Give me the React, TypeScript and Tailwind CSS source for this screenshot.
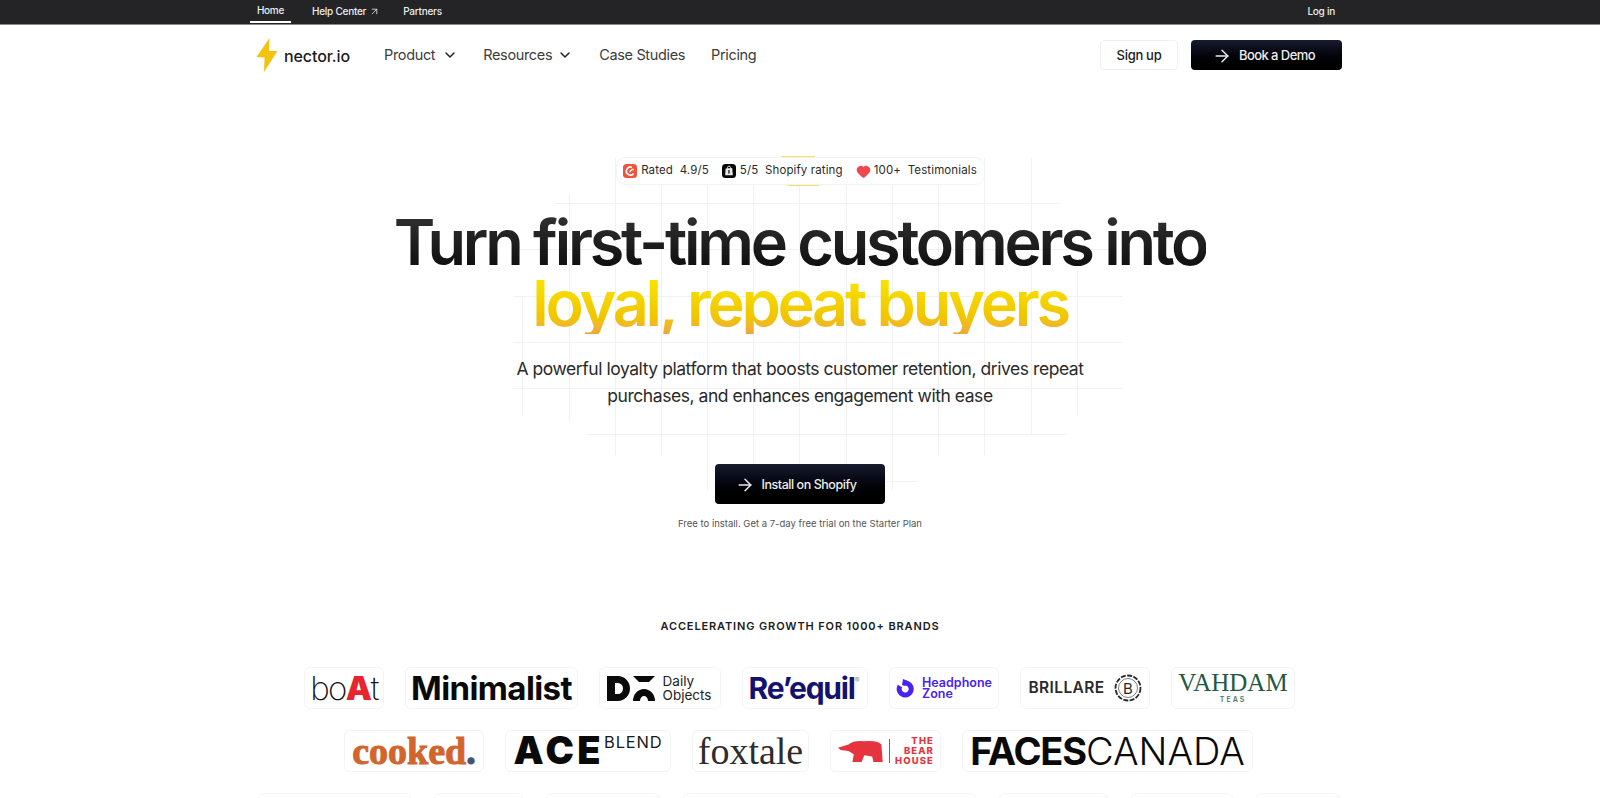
import React from "react";
import { ArrowRight, ArrowUpRight, ChevronDown, Heart } from "lucide-react";

const verticalLines = [
  { x: 522, y1: 296, y2: 415 },
  { x: 569, y1: 194, y2: 420 },
  { x: 615, y1: 157, y2: 455 },
  { x: 661, y1: 185, y2: 455 },
  { x: 707, y1: 185, y2: 490 },
  { x: 753, y1: 185, y2: 500 },
  { x: 799, y1: 185, y2: 500 },
  { x: 846, y1: 185, y2: 490 },
  { x: 892, y1: 185, y2: 490 },
  { x: 938, y1: 185, y2: 455 },
  { x: 984, y1: 157, y2: 455 },
  { x: 1031, y1: 158, y2: 434 },
  { x: 1077, y1: 270, y2: 415 },
];

const horizontalLines = [
  { y: 203, x1: 555, x2: 1060 },
  { y: 249, x1: 513, x2: 1113 },
  { y: 296, x1: 513, x2: 1122 },
  { y: 342, x1: 513, x2: 1122 },
  { y: 388, x1: 513, x2: 1122 },
  { y: 434, x1: 587, x2: 1067 },
  { y: 481, x1: 780, x2: 918 },
];

const GridLines = () => (
  <svg
    className="absolute left-0 top-0 pointer-events-none"
    width="1600"
    height="798"
    viewBox="0 0 1600 798"
  >
    {verticalLines.map((l) => (
      <line key={l.x} x1={l.x + 0.5} x2={l.x + 0.5} y1={l.y1} y2={l.y2} stroke="#f1f1f1" />
    ))}
    {horizontalLines.map((l) => (
      <line key={l.y} y1={l.y + 0.5} y2={l.y + 0.5} x1={l.x1} x2={l.x2} stroke="#f1f1f1" />
    ))}
  </svg>
);

const Bolt = () => (
  <svg width="22" height="34" viewBox="0 0 22 34">
    <path d="M13.5 0 L0.5 19 L8.5 19.5 L8 34 L21.5 13 L13 13 Z" fill="#f2c40f" />
  </svg>
);

const G2Icon = () => (
  <svg width="14" height="14" viewBox="0 0 14 14">
    <rect width="14" height="14" rx="3.5" fill="#f0523a" />
    <path d="M8.8 3.3 A4 4 0 1 0 10.5 9.6" fill="none" stroke="#fff" strokeWidth="1.7" />
    <path d="M6.5 8 L9 5.5 L10.8 5.5" fill="none" stroke="#fff" strokeWidth="1.3" />
  </svg>
);

const ShopifyIcon = () => (
  <svg width="14" height="14" viewBox="0 0 14 14">
    <rect width="14" height="14" rx="3.5" fill="#050505" />
    <path d="M3.6 4.6 L10.2 4 L10.8 11.2 L3.2 11.2 Z" fill="#e8e8e8" />
    <path d="M5.4 4.8 V3.8 A1.6 1.6 0 0 1 8.6 3.8 V4.6" fill="none" stroke="#e8e8e8" strokeWidth="0.9" />
    <rect x="6.2" y="6" width="1.5" height="3.6" fill="#333" />
  </svg>
);

const LogoCard = ({
  className,
  children,
}: {
  className: string;
  children?: React.ReactNode;
}) => (
  <div
    className={`h-[42px] shrink-0 flex items-center justify-center bg-white border border-[#f4f4f4] rounded-md ${className}`}
  >
    {children}
  </div>
);

const Topbar = () => (
  <div className="h-[25px] bg-[#242426] border-b border-[#8a8a8a] pl-[250px] pr-[265px] flex items-start justify-between text-[10px] text-[#ececec] font-medium tracking-[-0.25px]">
    <div className="flex items-start">
      <div className="w-[41px] h-[23px] flex items-center justify-center border-b-2 border-white pt-[1px] pb-[1px]">
        Home
      </div>
      <div className="ml-[21px] h-[21px] pt-[1px] flex items-center gap-[3px]">
        Help Center
        <ArrowUpRight size={11} strokeWidth={1.75} />
      </div>
      <div className="ml-[23px] h-[21px] pt-[1px] flex items-center">Partners</div>
    </div>
    <div className="h-[21px] pt-[1px] flex items-center">Log in</div>
  </div>
);

const Navbar = () => (
  <nav className="h-[60px] pl-[256px] pr-[258px] flex items-center justify-between">
    <div className="flex items-center">
      <Bolt />
      <span className="ml-[6px] pt-[1px] text-[16px] font-medium text-[#1c1c1c] tracking-[-0.1px]">
        nector.io
      </span>
      <div className="ml-[34px] flex items-center text-[14.5px] text-[#3c3c3c] tracking-[-0.35px]">
        <span>Product</span>
        <ChevronDown size={16} strokeWidth={2.2} className="ml-[7px] text-[#222]" />
        <span className="ml-[25px]">Resources</span>
        <ChevronDown size={16} strokeWidth={2.2} className="ml-[5px] text-[#222]" />
        <span className="ml-[26px]">Case Studies</span>
        <span className="ml-[26px]">Pricing</span>
      </div>
    </div>
    <div className="flex items-center gap-[13px]">
      <button className="w-[78px] h-[30px] pt-[1px] bg-white border border-[#f0f0f0] rounded text-[13px] font-medium text-[#1c1c1c] tracking-[-0.3px]">
        Sign up
      </button>
      <button className="w-[151px] h-[30px] pt-[1px] pr-[6px] rounded bg-gradient-to-b from-[#181c30] to-black text-[13px] text-[#ececec] font-medium tracking-[-0.55px] flex items-center justify-center gap-[7px]">
        <ArrowRight size={20} strokeWidth={1.75} />
        Book a Demo
      </button>
    </div>
  </nav>
);

const Hero = () => (
  <section className="flex flex-col items-center pt-[72px]">
    <div className="relative h-[28px] w-[369px]">
      <span className="absolute left-[165px] top-[-1px] w-[34px] h-[2px] bg-[#f6dc62]" />
      <span className="absolute left-[172px] bottom-[-1px] w-[31px] h-[2px] bg-[#f6dc62]" />
      <div className="relative h-full bg-white border border-[#f3f3f3] rounded-[10px] flex items-center justify-center gap-[13px] text-[11.5px] text-[#2c2c2c] tracking-[0.12px] whitespace-nowrap">
        <div className="flex items-center gap-[4px]">
          <G2Icon />
          <span>Rated&nbsp; 4.9/5</span>
        </div>
        <div className="flex items-center gap-[4px]">
          <ShopifyIcon />
          <span>5/5&nbsp; Shopify rating</span>
        </div>
        <div className="flex items-center gap-[3px]">
          <Heart size={15} fill="#f2474f" stroke="#f2474f" />
          <span>100+&nbsp; Testimonials</span>
        </div>
      </div>
    </div>
    <h1 className="relative mt-[27px] text-center text-[63px] leading-[61px] font-semibold tracking-[-3.25px] whitespace-nowrap">
      <span className="block bg-gradient-to-b from-[#333333] to-[#0c0c0c] bg-clip-text text-transparent">
        Turn first-time customers into
      </span>
      <span className="block bg-gradient-to-b from-[#f9e900] via-[#f0c400] via-75% to-[#f0a63a] bg-clip-text text-transparent">
        loyal, repeat buyers
      </span>
    </h1>
    <p className="relative mt-[21px] text-center text-[17.5px] leading-[27px] text-[#2a2a2a] tracking-[-0.45px]">
      A powerful loyalty platform that boosts customer retention, drives repeat
      <br />
      purchases, and enhances engagement with ease
    </p>
    <button className="relative mt-[55px] w-[170px] h-[40px] pt-[2px] pr-[9px] rounded bg-gradient-to-b from-[#181c30] to-black text-[12.5px] text-[#ececec] font-medium tracking-[-0.45px] flex items-center justify-center gap-[7px]">
      <ArrowRight size={20} strokeWidth={1.75} />
      Install on Shopify
    </button>
    <p className="relative mt-[12px] text-[9.5px] leading-4 text-[#555555]">
      Free to install. Get a 7-day free trial on the Starter Plan
    </p>
  </section>
);

const Brands = () => (
  <section className="flex flex-col items-center">
    <h2 className="mt-[86px] text-[11px] leading-4 font-semibold text-[#1c1c1c] tracking-[0.87px]">
      ACCELERATING GROWTH FOR 1000+ BRANDS
    </h2>
    <div className="mt-[33px] flex justify-center gap-[21px] mr-[1px]">
      <LogoCard className="w-[80px]">
        <span className="text-[33px] leading-[40px] font-extralight text-[#151515] tracking-[-1.6px]">
          bo<span className="font-black text-[#e8252f]">A</span>t
        </span>
      </LogoCard>
      <LogoCard className="w-[173px]">
        <span className="text-[33px] leading-[40px] font-bold text-[#0a0a0a] tracking-[-0.6px]">
          Minimalist
        </span>
      </LogoCard>
      <LogoCard className="w-[122px] gap-[8px] pr-[2px]">
        <svg width="48" height="25" viewBox="0 0 48 25">
          <path d="M0 0 H11 A12 12.5 0 0 1 11 25 H0 Z M8 7 V18 H11 A5 5.5 0 0 0 11 7 Z" fill="#0a0a0a" fillRule="evenodd" />
          <path d="M26 0 H48 L42 6 H32 Z" fill="#0a0a0a" />
          <path d="M26 25 A11 12 0 0 1 48 25 H41 A4 5 0 0 0 33 25 Z" fill="#0a0a0a" />
        </svg>
        <span className="text-[13.5px] leading-[14px] text-[#222]">
          Daily
          <br />
          Objects
        </span>
      </LogoCard>
      <LogoCard className="w-[126px] pr-[2px]">
        <span className="text-[30px] leading-[40px] font-bold text-[#13136e] tracking-[-1.2px]">
          Re’equil
        </span>
        <span className="text-[7px] self-start mt-[8px] text-[#888]">®</span>
      </LogoCard>
      <LogoCard className="w-[110px] gap-[7px]">
        <svg width="19" height="19" viewBox="0 0 19 19">
          <path d="M9 4 A6 6 0 1 1 4 7" fill="none" stroke="#4a22f0" strokeWidth="5" />
          <path d="M7 0 L12 2 L9 7 L6 6 Z" fill="#4a22f0" />
        </svg>
        <span className="text-[12.5px] leading-[11px] font-semibold text-[#4a22f0]">
          Headphone
          <br />
          Zone
        </span>
      </LogoCard>
      <LogoCard className="w-[130px] gap-[9px]">
        <span className="text-[15.5px] font-semibold text-[#2a2a2a] tracking-[0.4px]">
          BRILLARE
        </span>
        <svg width="28" height="28" viewBox="0 0 28 28">
          <circle cx="14" cy="14" r="12.5" fill="none" stroke="#2a2a2a" strokeWidth="1.8" strokeDasharray="5 1.4" />
          <circle cx="14" cy="14" r="9.5" fill="none" stroke="#2a2a2a" strokeWidth="0.6" />
          <text x="14" y="19.5" textAnchor="middle" fontSize="15" fill="#2a2a2a" fontFamily="Inter, sans-serif">
            B
          </text>
        </svg>
      </LogoCard>
      <LogoCard className="w-[124px] flex-col">
        <span className="font-['Liberation_Serif',serif] text-[25px] leading-[24px] text-[#1f5a43]">
          VAHDAM
        </span>
        <span className="text-[7px] leading-[10px] font-semibold tracking-[2px] text-[#3f7a63]">
          TEAS
        </span>
      </LogoCard>
    </div>
    <div className="mt-[21px] flex justify-center gap-[21px] mr-[3px]">
      <LogoCard className="w-[140px]">
        <span className="font-['Liberation_Serif',serif] text-[38px] leading-[40px] font-bold text-[#d2652c] [-webkit-text-stroke:1px_#d2652c]">
          cooked<span className="text-[#45546a] [-webkit-text-stroke:1px_#45546a]">.</span>
        </span>
      </LogoCard>
      <LogoCard className="w-[166px] items-start">
        <span className="text-[38px] leading-[38px] font-black text-[#0a0a0a] tracking-[3.5px]">
          ACE
        </span>
        <span className="text-[16.5px] leading-[22px] text-[#1a1a1a] tracking-[0.8px]">
          BLEND
        </span>
      </LogoCard>
      <LogoCard className="w-[117px]">
        <span className="font-['Liberation_Serif',serif] text-[38px] leading-[40px] text-[#2c2c2c]">
          foxtale
        </span>
      </LogoCard>
      <LogoCard className="w-[111px] justify-start pl-[7px] pr-[6px]">
        <svg width="46" height="24" viewBox="0 0 35 22" preserveAspectRatio="none">
          <path d="M0 8 L8 5 Q12 1 20 2 Q30 1 33 5 L34 21 H27 L26 16 L20 15 L18 21 H11 L12 14 L8 11 L2 10 Z" fill="#e5343d" />
        </svg>
        <span className="ml-[5px] w-px h-[24px] bg-[#e5343d]" />
        <span className="ml-auto text-[9.5px] leading-[10px] font-extrabold text-right text-[#e5343d] tracking-[1.1px]">
          THE
          <br />
          BEAR
          <br />
          HOUSE
        </span>
      </LogoCard>
      <LogoCard className="w-[291px]">
        <span className="text-[38px] leading-[40px] text-[#0a0a0a] whitespace-nowrap">
          <span className="font-bold tracking-[-1.2px]">FACES</span>
          <span className="font-light tracking-[0px]">CANADA</span>
        </span>
      </LogoCard>
    </div>
    <div className="mt-[21px] flex justify-center gap-[23px] mr-[2px]">
      <LogoCard className="w-[153px]" />
      <LogoCard className="w-[89px]" />
      <LogoCard className="w-[114px]" />
      <LogoCard className="w-[293px]" />
      <LogoCard className="w-[109px]" />
      <LogoCard className="w-[102px]" />
      <LogoCard className="w-[84px]" />
    </div>
  </section>
);

export default function App() {
  return (
    <div className="relative w-full h-screen overflow-hidden bg-white font-['Inter',sans-serif]">
      <GridLines />
      <div className="relative">
        <Topbar />
        <Navbar />
        <Hero />
        <Brands />
      </div>
    </div>
  );
}
